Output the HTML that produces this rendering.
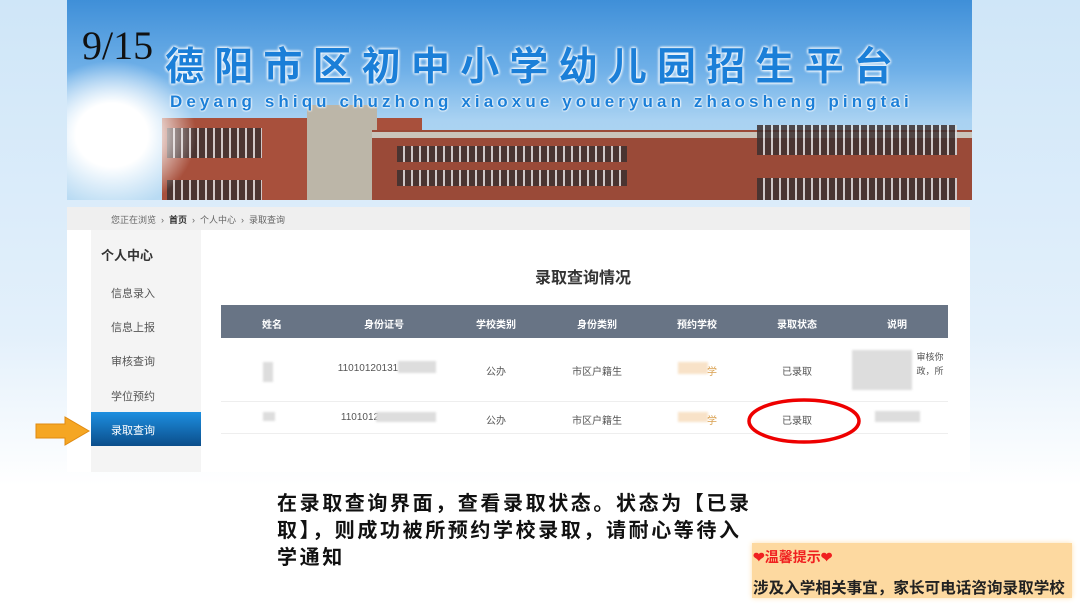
<!DOCTYPE html>
<html><head><meta charset="utf-8"><style>
*{margin:0;padding:0;box-sizing:border-box}
body{width:1080px;height:607px;overflow:hidden;position:relative;font-family:"Liberation Sans","Noto Sans CJK SC",sans-serif;background:linear-gradient(180deg,#cfe6f8 0%,#e3f0fb 55%,#fff 80%,#fff 100%)}
.abs{position:absolute}
.banner{left:67px;top:0;width:905px;height:200px;overflow:hidden;background:linear-gradient(180deg,#3f8fd8 0%,#6fb0e8 35%,#a9d2f2 60%,#b9dbf3 100%)}
.bld{position:absolute;background:#a8503c}
.win{position:absolute;background:repeating-linear-gradient(90deg,#3c3030 0 6px,#d9dde0 6px 8px);opacity:.85}
.title{left:165px;top:36px;font-size:39px;font-weight:bold;color:#1b7fd8;letter-spacing:10.2px;text-shadow:0 0 3px #fff,0 0 3px #fff,0 0 3px #fff;font-family:"Noto Sans CJK SC",sans-serif;white-space:nowrap}
.sub{left:170px;top:92px;font-size:17px;font-weight:bold;color:#1b7fd8;letter-spacing:4.1px;text-shadow:0 0 2px #fff,0 0 2px #fff,0 0 2px #fff;white-space:nowrap}
.pg{left:82px;top:22px;font-family:"Liberation Serif",serif;font-size:40px;color:#111}
.panel{left:67px;top:207px;width:903px;height:265px;background:#fff}
.crumb{left:67px;top:207px;width:903px;height:23px;background:#efefef;font-size:9px;color:#666;padding:6px 0 0 44px}
.side{left:91px;top:230px;width:110px;height:242px;background:#f4f4f4}
.si{position:absolute;left:20px;font-size:11px;color:#555}
.act{left:91px;top:412px;width:110px;height:34px;background:linear-gradient(180deg,#1d8fe0,#0b4d8a);color:#fff;font-size:11px;padding:10px 0 0 20px}
.th{left:221px;top:305px;width:727px;height:33px;background:#687485}
.c{position:absolute;width:100px;text-align:center;font-size:10px;color:#555;transform:translateX(-50%)}
.h{color:#fff;font-weight:bold;top:316px}
.blur{position:absolute;background:#ddd;filter:blur(1px)}
</style></head><body>
<div class="abs banner">
 <div class="bld" style="left:95px;top:118px;width:260px;height:82px"></div>
 <div class="bld" style="left:240px;top:105px;width:70px;height:95px;background:#bcb6a8"></div>
 <div class="bld" style="left:305px;top:130px;width:600px;height:70px;background:#9a4a38"></div>
 <div class="bld" style="left:305px;top:132px;width:600px;height:6px;background:#c9c4bb"></div>
 <div class="win" style="left:100px;top:128px;width:95px;height:30px"></div>
 <div class="win" style="left:100px;top:180px;width:95px;height:20px"></div>
 <div class="win" style="left:330px;top:146px;width:230px;height:16px"></div>
 <div class="win" style="left:330px;top:170px;width:230px;height:16px"></div>
 <div class="win" style="left:690px;top:125px;width:200px;height:30px"></div>
 <div class="win" style="left:690px;top:178px;width:200px;height:22px"></div>
 <div class="abs" style="left:-40px;top:60px;width:170px;height:150px;border-radius:50%;background:radial-gradient(#fff 30%,rgba(255,255,255,0) 70%)"></div>
</div>
<div class="abs title">德阳市区初中小学幼儿园招生平台</div>
<div class="abs sub">Deyang shiqu chuzhong xiaoxue youeryuan zhaosheng pingtai</div>
<div class="abs pg">9/15</div>
<div class="abs panel"></div>
<div class="abs crumb">您正在浏览 &nbsp;›&nbsp; <b style="color:#333">首页</b> &nbsp;›&nbsp; 个人中心 &nbsp;›&nbsp; 录取查询</div>
<div class="abs side">
 <div class="si" style="left:10px;top:15px;font-size:13px;font-weight:bold;color:#333">个人中心</div>
 <div class="si" style="top:55px">信息录入</div>
 <div class="si" style="top:89px">信息上报</div>
 <div class="si" style="top:123px">审核查询</div>
 <div class="si" style="top:158px">学位预约</div>
</div>
<div class="abs act">录取查询</div>
<svg class="abs" style="left:35px;top:416px" width="56" height="30"><path d="M1 8H30V1L54 15L30 29V22H1Z" fill="#f5a623" stroke="#e08a10"/></svg>
<div class="abs" style="left:535px;top:264px;font-size:16px;font-weight:bold;color:#333">录取查询情况</div>
<div class="abs th"></div>
<div class="c h" style="left:272px">姓名</div><div class="c h" style="left:384px">身份证号</div><div class="c h" style="left:496px">学校类别</div><div class="c h" style="left:597px">身份类别</div><div class="c h" style="left:697px">预约学校</div><div class="c h" style="left:797px">录取状态</div><div class="c h" style="left:897px">说明</div>
<div class="abs" style="left:221px;top:401px;width:727px;height:1px;background:#eee"></div>
<div class="abs" style="left:221px;top:433px;width:727px;height:1px;background:#eee"></div>
<div class="blur" style="left:263px;top:362px;width:10px;height:20px"></div>
<div class="blur" style="left:263px;top:412px;width:12px;height:9px"></div>
<div class="c" style="left:368px;top:363px">11010120131</div><div class="blur" style="left:398px;top:361px;width:38px;height:12px"></div>
<div class="c" style="left:360px;top:412px">1101012</div><div class="blur" style="left:376px;top:412px;width:60px;height:10px"></div>
<div class="c" style="left:496px;top:363px">公办</div><div class="c" style="left:496px;top:412px">公办</div>
<div class="c" style="left:597px;top:363px">市区户籍生</div><div class="c" style="left:597px;top:412px">市区户籍生</div>
<div class="blur" style="left:678px;top:362px;width:30px;height:12px;background:#f8e2c8"></div><div class="c" style="left:712px;top:363px;width:10px;color:#d9a050">学</div>
<div class="blur" style="left:678px;top:412px;width:30px;height:10px;background:#f8e2c8"></div><div class="c" style="left:712px;top:412px;width:10px;color:#d9a050">学</div>
<div class="c" style="left:797px;top:363px">已录取</div><div class="c" style="left:797px;top:412px">已录取</div>
<div class="blur" style="left:852px;top:350px;width:60px;height:40px"></div>
<div class="c" style="left:930px;top:350px;width:30px;font-size:9px;line-height:14px">审核你<br>政，所</div>
<div class="blur" style="left:875px;top:411px;width:45px;height:11px"></div>
<svg class="abs" style="left:745px;top:396px" width="118" height="50"><ellipse cx="59" cy="25" rx="55" ry="21" fill="none" stroke="#e00" stroke-width="3.5"/></svg>
<div class="abs" style="left:277px;top:488px;font-size:20px;font-weight:bold;line-height:27px;letter-spacing:2.6px;color:#111;font-family:'Noto Sans CJK SC',sans-serif;white-space:nowrap">在录取查询界面，查看录取状态。状态为【已录<br>取】，则成功被所预约学校录取，请耐心等待入<br>学通知</div>
<div class="abs" style="left:752px;top:543px;width:320px;height:55px;background:#fdd9a0;box-shadow:0 0 5px #fde0b0"></div>
<div class="abs" style="left:753px;top:547px;font-size:14px;font-weight:bold;color:#f02020;font-family:'Noto Sans CJK SC',sans-serif">❤温馨提示❤</div>
<div class="abs" style="left:753px;top:576px;font-size:15.6px;font-weight:bold;color:#222;font-family:'Noto Sans CJK SC',sans-serif;white-space:nowrap">涉及入学相关事宜，家长可电话咨询录取学校</div>
</body></html>
